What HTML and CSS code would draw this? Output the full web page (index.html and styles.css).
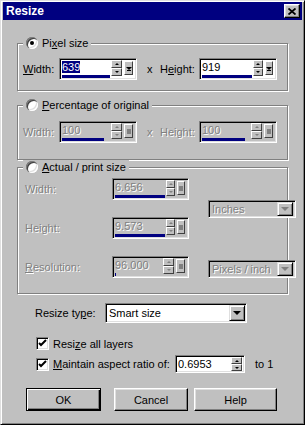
FILE: index.html
```html
<!DOCTYPE html>
<html>
<head>
  <meta charset="UTF-8">
  <link rel="stylesheet" href="styles.css">
</head>
<body>
  <div class="window">
    <div class="title-bar">
      <span class="title">Resize</span>
      <button class="close-button">
        <svg width="8" height="7" viewBox="0 0 8 7"><path d="M0.5 0.5l7 6M7.5 0.5l-7 6" stroke="#000" stroke-width="1.8"/></svg>
      </button>
    </div>

    <div class="content">
      <fieldset class="group group-pixel">
        <legend><span class="radio checked"></span>Pi<u>x</u>el size</legend>
        <div class="size-row">
          <span class="size-label"><u>W</u>idth:</span>
          <div class="spin">
            <div class="spin-field">
              <span class="spin-value"><span class="selected">639</span></span>
              <span class="slider" style="width: 48px"></span>
            </div>
            <div class="spin-arrows">
              <span class="arrow-btn"><span class="tri-up"></span></span>
              <span class="arrow-btn"><span class="tri-down"></span></span>
            </div>
            <span class="mini-drop"><span class="tri-down"></span></span>
          </div>
          <span class="times">x</span>
          <span class="size-label size-label-h">H<u>e</u>ight:</span>
          <div class="spin">
            <div class="spin-field">
              <span class="spin-value">919</span>
              <span class="slider" style="width: 50px"></span>
            </div>
            <div class="spin-arrows">
              <span class="arrow-btn"><span class="tri-up"></span></span>
              <span class="arrow-btn"><span class="tri-down"></span></span>
            </div>
            <span class="mini-drop"><span class="tri-down"></span></span>
          </div>
        </div>
      </fieldset>

      <fieldset class="group group-percent">
        <legend><span class="radio"></span><u>P</u>ercentage of original</legend>
        <div class="size-row disabled">
          <span class="size-label">Width:</span>
          <div class="spin">
            <div class="spin-field">
              <span class="spin-value">100</span>
              <span class="slider" style="width: 42px"></span>
            </div>
            <div class="spin-arrows">
              <span class="arrow-btn"><span class="tri-up"></span></span>
              <span class="arrow-btn"><span class="tri-down"></span></span>
            </div>
            <span class="mini-drop"><span class="square"></span></span>
          </div>
          <span class="times">x</span>
          <span class="size-label size-label-h">Height:</span>
          <div class="spin">
            <div class="spin-field">
              <span class="spin-value">100</span>
              <span class="slider" style="width: 43px"></span>
            </div>
            <div class="spin-arrows">
              <span class="arrow-btn"><span class="tri-up"></span></span>
              <span class="arrow-btn"><span class="tri-down"></span></span>
            </div>
            <span class="mini-drop"><span class="square"></span></span>
          </div>
        </div>
      </fieldset>

      <fieldset class="group group-print">
        <legend><span class="radio"></span><u>A</u>ctual / print size</legend>
        <div class="print-grid disabled">
          <span class="grid-label">Width:</span>
          <div class="spin spin-small">
            <div class="spin-field">
              <span class="spin-value">6.656</span>
              <span class="slider" style="width: 50px"></span>
            </div>
            <div class="spin-arrows">
              <span class="arrow-btn"><span class="tri-up"></span></span>
              <span class="arrow-btn"><span class="tri-down"></span></span>
            </div>
            <span class="mini-drop"><span class="square"></span></span>
          </div>
          <div class="select select-units">
            <span class="select-value">Inches</span>
            <span class="select-btn"><span class="tri-down big"></span></span>
          </div>

          <span class="grid-label">Height:</span>
          <div class="spin spin-small">
            <div class="spin-field">
              <span class="spin-value">9.573</span>
              <span class="slider" style="width: 50px"></span>
            </div>
            <div class="spin-arrows">
              <span class="arrow-btn"><span class="tri-up"></span></span>
              <span class="arrow-btn"><span class="tri-down"></span></span>
            </div>
            <span class="mini-drop"><span class="square"></span></span>
          </div>

          <span class="grid-label"><u>R</u>esolution:</span>
          <div class="spin spin-small">
            <div class="spin-field">
              <span class="spin-value">96.000</span>
              <span class="slider" style="width: 1px"></span>
            </div>
            <div class="spin-arrows">
              <span class="arrow-btn"><span class="tri-up"></span></span>
              <span class="arrow-btn"><span class="tri-down"></span></span>
            </div>
            <span class="mini-drop"><span class="square"></span></span>
          </div>
          <div class="select select-res">
            <span class="select-value">Pixels / inch</span>
            <span class="select-btn"><span class="tri-down big"></span></span>
          </div>
        </div>
      </fieldset>

      <div class="options">
        <div class="type-row">
          <span class="type-label">Resize ty<u>p</u>e:</span>
          <div class="select select-type">
            <span class="select-value">Smart size</span>
            <span class="select-btn"><span class="tri-down big"></span></span>
          </div>
        </div>
        <div class="check-row">
          <span class="checkbox"><svg width="9" height="9" viewBox="0 0 9 9"><path d="M1 4l2 2 5-5" stroke="#000" stroke-width="2" fill="none"/></svg></span>
          <span class="check-text">Resi<u>z</u>e all layers</span>
        </div>
        <div class="check-row ratio-row">
          <span class="checkbox"><svg width="9" height="9" viewBox="0 0 9 9"><path d="M1 4l2 2 5-5" stroke="#000" stroke-width="2" fill="none"/></svg></span>
          <span class="check-text ratio-text"><u>M</u>aintain aspect ratio of:</span>
          <div class="spin spin-ratio">
            <div class="spin-field">
              <span class="spin-value">0.6953</span>
            </div>
            <div class="spin-arrows">
              <span class="arrow-btn"><span class="tri-up"></span></span>
              <span class="arrow-btn"><span class="tri-down"></span></span>
            </div>
          </div>
          <span class="to-one">to 1</span>
        </div>
      </div>

      <div class="buttons">
        <button class="push-button default">OK</button>
        <button class="push-button cancel">Cancel</button>
        <button class="push-button help">Help</button>
      </div>
    </div>
  </div>
</body>
</html>
```

FILE: styles.css
```css
body {
  margin: 0;
  width: 305px;
  height: 425px;
  background: #c0c0c0;
  color: #000;
  font-family: "Liberation Sans", Arial, sans-serif;
  font-size: 11px;
  overflow: hidden;
  white-space: nowrap;
}

.window {
  box-sizing: border-box;
  width: 305px;
  height: 425px;
  border: 1px solid;
  border-color: #dfdfdf #000 #000 #dfdfdf;
  box-shadow: inset 1px 1px #fff, inset -1px -1px #808080;
  padding: 1px 2px 2px 2px;
}

.title-bar {
  height: 18px;
  background: #000080;
  display: flex;
  justify-content: space-between;
  align-items: center;
  padding: 0 2px 0 3px;
}

.title {
  color: #fff;
  font-weight: bold;
  font-size: 12px;
}

.close-button {
  width: 16px;
  height: 14px;
  padding: 0;
  background: #c0c0c0;
  border: 1px solid;
  border-color: #fff #000 #000 #fff;
  box-shadow: inset -1px -1px #808080, inset 1px 1px #dfdfdf;
  display: flex;
  align-items: center;
  justify-content: center;
}

.content {
  padding: 0 14px;
}

/* group boxes */
.group {
  margin: 0;
  border: 1px solid #808080;
  box-shadow: 1px 1px 0 #fff, inset 1px 1px 0 #fff;
  min-inline-size: 0;
}

.group legend {
  display: flex;
  align-items: center;
  line-height: 14px;
  height: 14px;
  padding: 0 3px;
  background: #c0c0c0;
}

.group-pixel {
  margin-top: 16px;
  padding: 8px 9px 10px 5px;
}

.group-percent {
  margin-top: 7px;
  padding: 9px 9px 16px 5px;
}

.group-print {
  margin-top: 0;
  padding: 4px 9px 15px 5px;
}

.radio {
  position: relative;
  width: 12px;
  height: 12px;
  border-radius: 50%;
  background: #fff;
  box-shadow: inset 1px 1px #808080, inset 2px 2px #404040, inset -1px -1px #fff, inset -2px -2px #dfdfdf;
  margin-right: 4px;
}

.radio.checked::after {
  content: "";
  position: absolute;
  left: 4px;
  top: 4px;
  width: 4px;
  height: 4px;
  border-radius: 50%;
  background: #000;
}

.size-row {
  display: flex;
  align-items: center;
}

.size-label {
  width: 36px;
}

.size-label-h {
  width: 39px;
}

.times {
  width: 6px;
  margin: 0 7px 0 10px;
}

.disabled .size-label,
.disabled .times,
.disabled .grid-label,
.disabled .spin-value,
.disabled .select-value {
  color: #808080;
  text-shadow: 1px 1px 0 #fff;
}

/* spin boxes */
.spin {
  box-sizing: border-box;
  width: 78px;
  height: 22px;
  display: flex;
  background: #fff;
  border: 1px solid;
  border-color: #808080 #fff #fff #808080;
  box-shadow: inset 1px 1px #000, inset -1px -1px #dfdfdf;
  padding: 1px 3px 1px 1px;
}

.disabled .spin {
  background: #c0c0c0;
}

.spin-small {
  width: 77px;
}

.spin-field {
  flex: 1;
  display: flex;
  flex-direction: column;
  justify-content: space-between;
  padding-left: 1px;
}

.spin-value {
  line-height: 15px;
}

.selected {
  background: #000080;
  color: #fff;
}

.slider {
  height: 3px;
  background: #000080;
}

.spin-arrows {
  display: flex;
  flex-direction: column;
  width: 11px;
  margin-left: 1px;
}

.arrow-btn {
  box-sizing: border-box;
  height: 8px;
  background: #c0c0c0;
  border: 1px solid;
  border-color: #fff #404040 #404040 #fff;
  display: flex;
  align-items: center;
  justify-content: center;
}

.tri-up,
.tri-down {
  width: 0;
  height: 0;
  border-left: 2px solid transparent;
  border-right: 2px solid transparent;
}

.tri-up {
  border-bottom: 2px solid #000;
}

.tri-down {
  border-top: 2px solid #000;
}

.disabled .tri-up {
  border-bottom-color: #808080;
}

.disabled .tri-down {
  border-top-color: #808080;
}

.tri-down.big {
  border-left-width: 4px;
  border-right-width: 4px;
  border-top-width: 4px;
}

.mini-drop {
  box-sizing: border-box;
  width: 9px;
  height: 14px;
  margin: 1px 0 0 2px;
  background: #c0c0c0;
  border: 1px solid;
  border-color: #fff #404040 #404040 #fff;
  display: flex;
  align-items: center;
  justify-content: center;
}

.mini-drop .tri-down {
  border-left-width: 3px;
  border-right-width: 3px;
  border-top-width: 3px;
  box-shadow: 0 2px 0 -1px #000;
}

.square {
  width: 4px;
  height: 5px;
  background: #808080;
}

/* print size grid */
.print-grid {
  display: grid;
  grid-template-columns: 68px 77px 88px;
  grid-template-rows: 22px 22px 22px;
  column-gap: 19px;
  row-gap: 17px;
  padding-left: 2px;
}

.grid-label {
  align-self: center;
}

.select {
  box-sizing: border-box;
  height: 18px;
  display: flex;
  align-items: center;
  justify-content: space-between;
  background: #fff;
  border: 1px solid;
  border-color: #808080 #fff #fff #808080;
  box-shadow: inset 1px 1px #000, inset -1px -1px #dfdfdf;
  padding: 0 2px 0 3px;
}

.disabled .select {
  background: #c0c0c0;
}

.select-units {
  grid-column: 3;
  grid-row: 1 / 3;
  align-self: center;
}

.select-res {
  grid-column: 3;
  grid-row: 3;
  align-self: end;
}

.select-btn {
  box-sizing: border-box;
  width: 16px;
  height: 14px;
  background: #c0c0c0;
  border: 1px solid;
  border-color: #dfdfdf #000 #000 #dfdfdf;
  box-shadow: inset 1px 1px #fff, inset -1px -1px #808080;
  display: flex;
  align-items: center;
  justify-content: center;
}

/* bottom options */
.options {
  padding: 9px 0 0 18px;
}

.type-row {
  display: flex;
  align-items: center;
}

.type-label {
  width: 70px;
}

.select-type {
  width: 142px;
  height: 20px;
  padding-right: 1px;
}

.select-type .select-btn {
  height: 16px;
}

.check-row {
  display: flex;
  align-items: center;
  margin-top: 14px;
  height: 13px;
  padding-left: 1px;
}

.ratio-row {
  margin-top: 5px;
  height: 18px;
}

.checkbox {
  box-sizing: border-box;
  width: 13px;
  height: 13px;
  background: #fff;
  border: 1px solid;
  border-color: #808080 #fff #fff #808080;
  box-shadow: inset 1px 1px #000, inset -1px -1px #dfdfdf;
  display: flex;
  align-items: center;
  justify-content: center;
  margin-right: 4px;
}

.ratio-text {
  width: 122px;
}

.spin-ratio {
  width: 70px;
  height: 18px;
  padding: 1px 2px 1px 1px;
}

.spin-ratio .spin-value {
  line-height: 14px;
}

.to-one {
  margin-left: 10px;
}

/* push buttons */
.buttons {
  display: flex;
  padding: 15px 0 0 9px;
}

.push-button {
  box-sizing: border-box;
  height: 23px;
  padding: 0;
  background: #c0c0c0;
  font-family: inherit;
  font-size: 11px;
  color: #000;
  border: 1px solid;
  border-color: #fff #000 #000 #fff;
  box-shadow: inset -1px -1px #808080, inset 1px 1px #dfdfdf;
}

.push-button.default {
  width: 75px;
  border-color: #000;
  box-shadow: inset 1px 1px #fff, inset -1px -1px #000, inset -2px -2px #808080;
}

.push-button.cancel {
  width: 74px;
  margin-left: 13px;
}

.push-button.help {
  width: 83px;
  margin-left: 6px;
}
```
